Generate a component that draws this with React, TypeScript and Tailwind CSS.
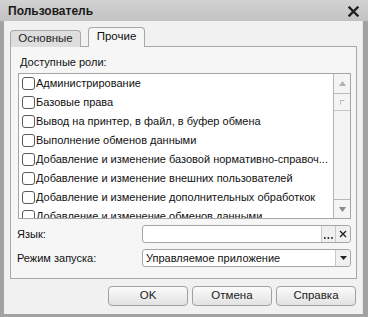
import React from "react";

const items = [
  "Администрирование",
  "Базовые права",
  "Вывод на принтер, в файл, в буфер обмена",
  "Выполнение обменов данными",
  "Добавление и изменение базовой нормативно-справоч...",
  "Добавление и изменение внешних пользователей",
  "Добавление и изменение дополнительных обработкок",
  "Добавление и изменение обменов данными",
];

function Check() {
  return (
    <span className="w-[13px] h-[13px] shrink-0 rounded-[3px] border border-[#5a5a5a] bg-white" />
  );
}

export default function App() {
  return (
    <div className="w-[368px] h-[317px] flex flex-col bg-[#a2a2a2] font-['Liberation_Sans',Arial,sans-serif] text-[11px] text-[#111]">
      {/* title bar */}
      <div className="h-[21px] shrink-0 flex items-center justify-between bg-gradient-to-b from-[#d2d2d2] to-[#c2c2c2] pl-[8px] pr-[9px]">
        <span className="font-bold text-[12px] leading-[13px] mt-[2px] text-[#1a1a1a]">Пользователь</span>
        <svg width="11" height="11" viewBox="0 0 11 11" className="mt-[2px]">
          <path d="M1.5 1.5 L9.5 9.5 M9.5 1.5 L1.5 9.5" stroke="#1e1e1e" strokeWidth="2.3" strokeLinecap="square" />
        </svg>
      </div>
      {/* body */}
      <div className="flex-1 ml-[4px] mr-[5px] mb-[3px] bg-[#f1f1f1] border-r border-[#e6e6e6] flex flex-col px-[6px] pt-[6px]">
        {/* tabs */}
        <div className="h-[19px] flex items-end gap-[7px] relative z-10">
          <div className="w-[71px] h-[17px] -mb-[1px] rounded-t-[4px] border border-b-0 border-[#a8a8a8] bg-[#dedede] flex items-center justify-center text-[#222] text-[11.5px]">
            Основные
          </div>
          <div className="w-[57px] h-[20px] -mb-[1px] rounded-t-[4px] border border-b-0 border-[#a8a8a8] bg-[#f6f6f6] flex items-center justify-center pb-[2px] text-[11.5px]">
            Прочие
          </div>
        </div>
        {/* panel */}
        <div className="h-[233px] w-[347px] shrink-0 border border-[#a8a8a8] bg-[#f6f6f6] flex flex-col pl-[7px] pr-[5px] pt-[8px]">
          <div className="h-[14px] leading-[14px] ml-[2px]">Доступные роли:</div>
          <div className="mt-[4px] h-[146px] w-[333px] border border-[#a5a5a5] bg-white flex">
            <div className="flex-1 overflow-hidden">
              {items.map((t) => (
                <div key={t} className="h-[19px] flex items-center pl-[3px] gap-[1px] whitespace-nowrap">
                  <Check />
                  <span>{t}</span>
                </div>
              ))}
            </div>
            <div className="w-[17px] shrink-0 border-l border-[#b4b4b4] bg-[#f4f4f4] flex flex-col">
              <div className="h-[20px] border-b border-[#b8b8b8] flex items-center justify-center">
                <svg width="7" height="5" viewBox="0 0 7 5"><path d="M0 5 L3.5 0 L7 5 Z" fill="#b0b0b0" /></svg>
              </div>
              <div className="h-[17px] border-b border-[#c4c4c4] flex items-center justify-center">
                <svg width="5" height="5" viewBox="0 0 5 5"><path d="M0.5 4.5 L0.5 0.5 L4.5 0.5" stroke="#b8b8b8" fill="none" /></svg>
              </div>
              <div className="flex-1" />
              <div className="h-[19px] border-t border-[#b8b8b8] flex items-center justify-center">
                <svg width="7" height="5" viewBox="0 0 7 5"><path d="M0 0 L7 0 L3.5 5 Z" fill="#8a8a8a" /></svg>
              </div>
            </div>
          </div>
          <div className="mt-[6px] grid grid-cols-[125px_209px] -ml-[1px] gap-y-[6px] items-center">
            <span>Язык:</span>
            <div className="h-[18px] rounded-[3px] border border-[#a5a5a5] bg-white flex justify-end">
              <div className="w-[14px] border-l border-[#c8c8c8] bg-[#f0f0f0] flex items-end justify-center pb-[3px]">
                <svg width="9" height="2" viewBox="0 0 9 2">
                  <rect x="0" y="0" width="1.6" height="2" fill="#333" />
                  <rect x="3.6" y="0" width="1.6" height="2" fill="#333" />
                  <rect x="7.2" y="0" width="1.6" height="2" fill="#333" />
                </svg>
              </div>
              <div className="w-[15px] border-l border-[#c8c8c8] bg-[#f0f0f0] flex items-center justify-center rounded-r-[3px]">
                <svg width="8" height="8" viewBox="0 0 8 8"><path d="M1 1 L7 7 M7 1 L1 7" stroke="#222" strokeWidth="1.4" /></svg>
              </div>
            </div>
            <span>Режим запуска:</span>
            <div className="h-[18px] rounded-[3px] border border-[#a5a5a5] bg-white flex items-center">
              <span className="flex-1 pl-[3px]">Управляемое приложение</span>
              <div className="w-[15px] h-full border-l border-[#c8c8c8] bg-[#f0f0f0] flex items-center justify-center rounded-r-[3px]">
                <svg width="7" height="4" viewBox="0 0 7 4"><path d="M0 0 L7 0 L3.5 4 Z" fill="#222" /></svg>
              </div>
            </div>
          </div>
        </div>
        {/* buttons */}
        <div className="mt-[7px] flex justify-end gap-[4px]">
          {["OK", "Отмена", "Справка"].map((b) => (
            <div key={b} className="w-[80px] h-[20px] rounded-[4px] border border-[#a0a0a0] bg-gradient-to-b from-[#fbfbfb] to-[#e2e2e2] flex items-center justify-center text-[#222] text-[11.5px]">
              {b}
            </div>
          ))}
        </div>
      </div>
    </div>
  );
}
